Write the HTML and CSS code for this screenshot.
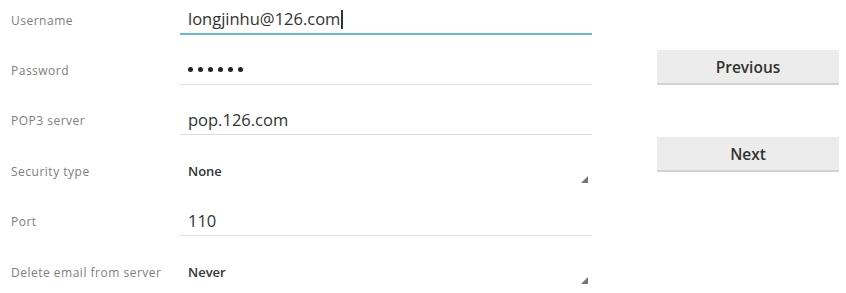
FILE: index.html
```html
<!DOCTYPE html>
<html>
<head>
<meta charset="utf-8">
<link rel="stylesheet" href="styles.css">
</head>
<body>
<div class="screen">
  <div class="form">
    <div class="row">
      <div class="label">Username</div>
      <div class="field edit focused"><span class="value">longjinhu@126.com</span><span class="cursor"></span></div>
    </div>
    <div class="row">
      <div class="label">Password</div>
      <div class="field edit"><span class="dots" aria-label="••••••"><i></i><i></i><i></i><i></i><i></i><i></i></span></div>
    </div>
    <div class="row">
      <div class="label">POP3 server</div>
      <div class="field edit"><span class="value">pop.126.com</span></div>
    </div>
    <div class="row">
      <div class="label">Security type</div>
      <div class="field spinner"><span class="choice">None</span><span class="corner"></span></div>
    </div>
    <div class="row">
      <div class="label">Port</div>
      <div class="field edit"><span class="value">110</span></div>
    </div>
    <div class="row">
      <div class="label">Delete email from server</div>
      <div class="field spinner"><span class="choice">Never</span><span class="corner"></span></div>
    </div>
  </div>
  <div class="actions">
    <button class="btn">Previous</button>
    <button class="btn">Next</button>
  </div>
</div>
</body>
</html>
```

FILE: styles.css
```css
html, body {
  margin: 0;
  padding: 0;
  background: #ffffff;
}
body {
  font-family: "Open Sans", Roboto, "Liberation Sans", sans-serif;
  color: #333;
}
.screen {
  display: flex;
  width: 846px;
  height: 293px;
  overflow: hidden;
}
.form {
  width: 600px;
  margin-top: -5px;
}
.row {
  display: grid;
  grid-template-columns: 180px 412px;
  height: 50.4px;
  align-items: center;
}
.label {
  padding-left: 11px;
  font-size: 12px;
  color: #7e7e7e;
  letter-spacing: 0.5px;
}
.field {
  position: relative;
  height: 28px;
  box-sizing: content-box;
  display: flex;
  align-items: center;
  padding-left: 8px;
}
.edit {
  border-bottom: 1px solid #dedede;
}
.edit.focused {
  border-bottom: 2px solid #6cb7cb;
  height: 27px;
}
.value {
  font-size: 16.5px;
  font-weight: 500;
  color: #333;
  line-height: 20px;
}
.dots {
  display: flex;
  gap: 5px;
  margin-top: -2px;
}
.dots i {
  width: 5px;
  height: 5px;
  border-radius: 50%;
  background: #222;
}
.cursor {
  width: 2px;
  height: 19px;
  background: #333;
  margin-left: 1px;
}
.choice {
  font-size: 13px;
  font-weight: 600;
  color: #333;
}
.corner {
  position: absolute;
  right: 4px;
  bottom: 2px;
  width: 0;
  height: 0;
  border-left: 7px solid transparent;
  border-bottom: 7px solid #777;
}
.actions {
  margin-left: 57px;
  width: 182px;
  padding-top: 50px;
  display: flex;
  flex-direction: column;
  gap: 52px;
}
.btn {
  height: 35px;
  border: none;
  border-bottom: 2px solid #d2d2d2;
  background: #ececec;
  font-family: "Open Sans", Roboto, "Liberation Sans", sans-serif;
  font-size: 15.5px;
  font-weight: 600;
  color: #333;
  padding: 0;
}
```
